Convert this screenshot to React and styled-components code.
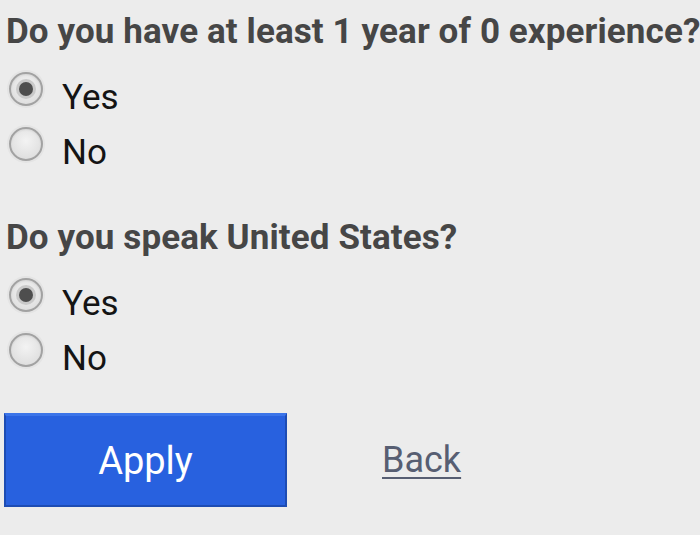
import React, { useState } from 'react'
import styled, { createGlobalStyle } from 'styled-components'

const Global = createGlobalStyle`
  html, body { margin: 0; padding: 0; background: #ececec; }
  body { font-family: Roboto, "Liberation Sans", sans-serif; }
`

const Page = styled.div`
  width: 700px;
  height: 535px;
  overflow: hidden;
  background: #ececec;
  padding: 0 0 0 6px;
  box-sizing: border-box;
`

const Question = styled.div`
  margin-bottom: ${p => p.gap || 0}px;
`

const Heading = styled.div`
  font-size: 35px;
  font-weight: 700;
  color: #464646;
  letter-spacing: 0.1px;
  line-height: 56px;
  padding-top: 4px;
  margin-bottom: 10px;
  white-space: nowrap;
`

const Option = styled.label`
  display: flex;
  align-items: flex-start;
  height: 55px;
  cursor: pointer;
`

const Circle = styled.span`
  flex: none;
  width: 34px;
  height: 34px;
  box-sizing: border-box;
  border-radius: 50%;
  border: 2px solid #a2a2a2;
  background: radial-gradient(circle at 50% 40%, #f3f3f3, #d9d9d9);
  box-shadow: 0 0 0 2px #e4e4e4, inset 0 1px 2px rgba(0,0,0,0.08);
  display: flex;
  align-items: center;
  justify-content: center;
  margin: 2px 0 0 3px;
  &::after {
    content: '';
    width: 14px;
    height: 14px;
    border-radius: 50%;
    background: #4e4e4e;
    box-shadow: 0 0 0 3px #c9c9c9;
    display: ${p => (p.checked ? 'block' : 'none')};
  }
`

const OptionText = styled.span`
  font-size: 35px;
  line-height: 55px;
  color: #141414;
  margin-left: 19px;
`

const Actions = styled.div`
  display: flex;
  align-items: center;
  margin-top: 27px;
  margin-left: -2px;
`

const ApplyButton = styled.button`
  flex: none;
  width: 283px;
  height: 94px;
  background: #2861df;
  border: 2px solid #1d4cb3;
  border-top: 3px solid #3b74e9;
  color: #fff;
  font-family: Roboto, "Liberation Sans", sans-serif;
  font-size: 38px;
  padding: 0;
  cursor: pointer;
`

const BackLink = styled.a`
  margin-left: 95px;
  font-size: 36px;
  color: #575e72;
  text-decoration: underline;
  text-underline-offset: 5px;
  text-decoration-thickness: 2px;
`

function RadioGroup({ options, value, onChange }) {
  return options.map(o => (
    <Option key={o} onClick={() => onChange(o)}>
      <Circle checked={value === o} />
      <OptionText>{o}</OptionText>
    </Option>
  ))
}

export default function App() {
  const [a, setA] = useState('Yes')
  const [b, setB] = useState('Yes')
  return (
    <Page>
      <Global />
      <Question gap={26}>
        <Heading>Do you have at least 1 year of 0 experience?</Heading>
        <RadioGroup options={['Yes', 'No']} value={a} onChange={setA} />
      </Question>
      <Question>
        <Heading>Do you speak United States?</Heading>
        <RadioGroup options={['Yes', 'No']} value={b} onChange={setB} />
      </Question>
      <Actions>
        <ApplyButton>Apply</ApplyButton>
        <BackLink href="#">Back</BackLink>
      </Actions>
    </Page>
  )
}
